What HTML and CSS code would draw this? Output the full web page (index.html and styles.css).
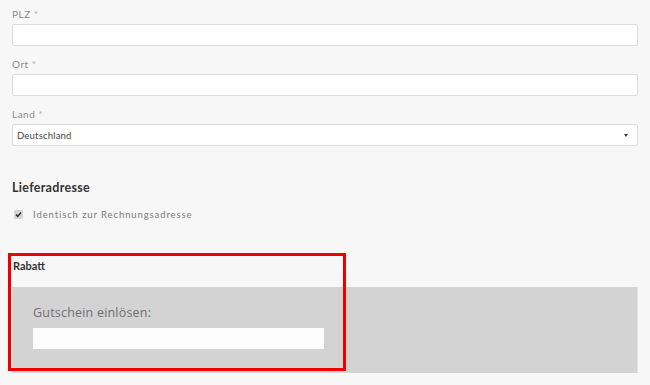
FILE: index.html
```html
<!DOCTYPE html>
<html>
<head>
	<title>Checkout - Adresse</title>
	<meta content="width=device-width, initial-scale=1" name="viewport">
	<link rel="stylesheet" href="styles.css">
</head>
<body>
<main class="checkout">
	<div class="field">
		<label class="field-label">PLZ <span class="req">*</span></label>
		<div class="field-input"></div>
	</div>
	<div class="field">
		<label class="field-label">Ort <span class="req">*</span></label>
		<div class="field-input"></div>
	</div>
	<div class="field">
		<label class="field-label">Land <span class="req">*</span></label>
		<div class="field-input field-select">
			<span>Deutschland</span>
			<span class="select-arrow"></span>
		</div>
	</div>

	<h3 class="section-title">Lieferadresse</h3>
	<div class="check-row">
		<span class="check-box">
			<svg aria-hidden="true" height="9" viewBox="0 0 9 9" width="9">
				<path d="M2,4.6 L3.8,6.4 L7,2.6" fill="none" stroke="#333" stroke-width="1.6"></path>
			</svg>
		</span>
		<span class="check-text">Identisch zur Rechnungsadresse</span>
	</div>

	<section class="discount">
		<h4 class="discount-title">Rabatt</h4>
		<div class="voucher">
			<div class="voucher-label">Gutschein einlösen:</div>
			<div class="voucher-input"></div>
		</div>
	</section>
</main>
<div class="highlight"></div>
</body>
</html>
```
FILE: styles.css
```css
body {
	margin: 0;
	padding: 0;
	background: #f7f7f7;
	font-family: Lato, "Open Sans", sans-serif;
	color: #333;
}

.checkout {
	padding: 7px 12px 0 12px;
}

.field {
	margin-bottom: 11px;
}

.field-label {
	display: block;
	font-size: 10px;
	line-height: 14px;
	letter-spacing: 0.5px;
	color: #8a8a8a;
	margin-bottom: 3px;
}

.req {
	color: #aaa;
}

.field-input {
	box-sizing: border-box;
	height: 22px;
	background: #fff;
	border: 1px solid #dcdcdc;
	border-radius: 2px;
}

.field-select {
	display: flex;
	align-items: center;
	justify-content: space-between;
	padding: 0 9px 0 4px;
	font-size: 9.5px;
	color: #444;
	letter-spacing: 0.2px;
}

.select-arrow {
	width: 0;
	height: 0;
	border-left: 2px solid transparent;
	border-right: 2px solid transparent;
	border-top: 3px solid #333;
}

.section-title {
	margin: 34px 0 0 0;
	font-size: 12.5px;
	line-height: 16px;
	font-weight: 700;
	letter-spacing: 0.3px;
	color: #333;
}

.check-row {
	display: flex;
	align-items: center;
	margin-top: 13px;
	padding-left: 2px;
}

.check-box {
	display: inline-flex;
	width: 9px;
	height: 9px;
	background: #d6d6d6;
	border-radius: 1px;
}

.check-text {
	margin-left: 10px;
	font-size: 9.5px;
	letter-spacing: 0.9px;
	color: #7a7a7a;
}

.discount {
	margin-top: 39px;
}

.discount-title {
	margin: 0 0 14px 1px;
	font-size: 11px;
	line-height: 14px;
	font-weight: 700;
	color: #333;
}

.voucher {
	height: 86px;
	box-sizing: border-box;
	padding: 17px 21px 0 21px;
	background: #d3d3d3;
	border-right: 1px solid #e2e2e2;
}

.voucher-label {
	font-family: "Open Sans", sans-serif;
	font-size: 12.5px;
	line-height: 18px;
	color: #6f6f6f;
	letter-spacing: 0.2px;
}

.voucher-input {
	width: 291px;
	height: 21px;
	margin-top: 6px;
	background: #fcfcfc;
}

/* annotation frame drawn over the discount block */
.highlight {
	position: absolute;
	left: 8px;
	top: 253px;
	width: 332px;
	height: 112px;
	border: 3px solid #ee0000;
}
```
